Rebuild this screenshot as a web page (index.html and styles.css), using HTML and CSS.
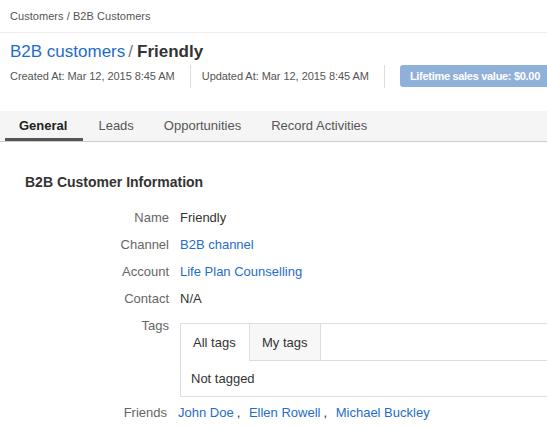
FILE: index.html
```html
<!DOCTYPE html>
<html lang="en">
<head>
    <meta charset="UTF-8">
    <title>B2B customers / Friendly</title>
    <link rel="stylesheet" href="styles.css">
</head>
<body>
    <div class="breadcrumb">Customers / B2B Customers</div>

    <div class="page-header">
        <h1><a href="#" class="title-link">B2B customers</a><span class="slash">/</span><b>Friendly</b></h1>
        <div class="meta">
            <span class="meta-item">Created At: Mar 12, 2015 8:45 AM</span>
            <span class="meta-item">Updated At: Mar 12, 2015 8:45 AM</span>
            <span class="meta-item last"><span class="badge">Lifetime sales value: $0.00</span></span>
        </div>
    </div>

    <div class="tabs">
        <a href="#" class="tab active">General</a>
        <a href="#" class="tab">Leads</a>
        <a href="#" class="tab">Opportunities</a>
        <a href="#" class="tab">Record Activities</a>
    </div>

    <div class="section">
        <h2>B2B Customer Information</h2>
        <div class="row">
            <div class="label">Name</div>
            <div class="value">Friendly</div>
        </div>
        <div class="row">
            <div class="label">Channel</div>
            <div class="value"><a href="#">B2B channel</a></div>
        </div>
        <div class="row">
            <div class="label">Account</div>
            <div class="value"><a href="#">Life Plan Counselling</a></div>
        </div>
        <div class="row">
            <div class="label">Contact</div>
            <div class="value">N/A</div>
        </div>
        <div class="row tags-row">
            <div class="label">Tags</div>
            <div class="value">
                <div class="tag-box">
                    <div class="tag-tabs">
                        <span class="tag-tab active">All tags</span>
                        <span class="tag-tab">My tags</span>
                        <span class="tag-fill"></span>
                    </div>
                    <div class="tag-content">Not tagged</div>
                </div>
            </div>
        </div>
        <div class="row friends-row">
            <div class="label">Friends</div>
            <div class="value friends">
                <a href="#">John Doe</a><span class="sep">,</span>
                <a href="#">Ellen Rowell</a><span class="sep">,</span>
                <a href="#">Michael Buckley</a>
            </div>
        </div>
    </div>
</body>
</html>
```

FILE: styles.css
```css
body {
    font-family: "Liberation Sans", Arial, sans-serif;
    font-size: 13px;
    color: #333;
    margin: 0;
    overflow: hidden;
}
a {
    color: #1f6ccb;
    text-decoration: none;
}
.breadcrumb {
    font-size: 11px;
    color: #555;
    padding: 10px 10px 0;
    height: 22px;
    border-bottom: 1px solid #eee;
    letter-spacing: 0.05px;
}
.page-header {
    padding: 0 10px;
}
h1 {
    font-size: 17px;
    font-weight: normal;
    margin: 9px 0 0;
    line-height: 20px;
    white-space: nowrap;
}
.title-link {
    color: #1f6ccb;
}
.slash {
    color: #777;
    margin: 0 4px 0 3px;
}
h1 b {
    color: #333;
}
.meta {
    display: flex;
    align-items: center;
    margin-top: 3px;
    font-size: 11px;
    color: #555;
    white-space: nowrap;
    letter-spacing: -0.05px;
}
.meta-item {
    padding-right: 15px;
    margin-right: 11px;
    border-right: 1px solid #ddd;
    line-height: 23px;
    flex-shrink: 0;
}
.meta-item.last {
    border-right: none;
    padding: 0;
    margin-left: 4px;
}
.badge {
    display: inline-block;
    background-color: #8fb1d9;
    color: #fff;
    font-weight: bold;
    padding: 0 14px 0 10px;
    line-height: 22px;
    border-radius: 3px;
    letter-spacing: -0.3px;
}
.tabs {
    margin-top: 23px;
    background-color: #f5f5f5;
    height: 30px;
    border-bottom: 1px solid #ccc;
    display: flex;
    padding-left: 5px;
}
.tab {
    color: #555;
    font-size: 13px;
    padding: 7px 15px 0 15px;
    box-sizing: border-box;
    height: 30px;
}
.tab.active {
    color: #222;
    font-weight: bold;
    padding-left: 14px;
    padding-right: 16px;
    border-bottom: 3px solid #555;
}
.section {
    padding: 32px 0 0 25px;
}
h2 {
    font-size: 14px;
    font-weight: bold;
    margin: 0 0 20px;
    color: #333;
}
.row {
    display: flex;
    line-height: 16px;
    margin-bottom: 11px;
}
.label {
    width: 144px;
    text-align: right;
    color: #666;
    flex-shrink: 0;
}
.value {
    padding-left: 11px;
    flex: 1;
    min-width: 0;
}
.tags-row {
    margin-top: 5px;
    margin-bottom: 8px;
}
.tags-row .value {
    padding-top: 5px;
}
.tag-box {
    border: 1px solid #ddd;
    border-right: none;
}
.tag-tabs {
    display: flex;
    height: 37px;
}
.tag-tab {
    padding: 11px 12px 0 12px;
    border-right: 1px solid #ddd;
    box-sizing: border-box;
    color: #333;
}
.tag-tab.active {
    width: 69px;
}
.tag-tab:not(.active) {
    background-color: #f7f7f7;
    border-bottom: 1px solid #ddd;
    width: 71px;
}
.tag-fill {
    flex: 1;
    border-bottom: 1px solid #ddd;
}
.tag-content {
    padding: 10px 10px 9px;
}
.friends-row .label {
    width: 142px;
}
.friends-row .value {
    padding-left: 11px;
}
.friends .sep {
    margin: 0 5px 0 3px;
}
```
